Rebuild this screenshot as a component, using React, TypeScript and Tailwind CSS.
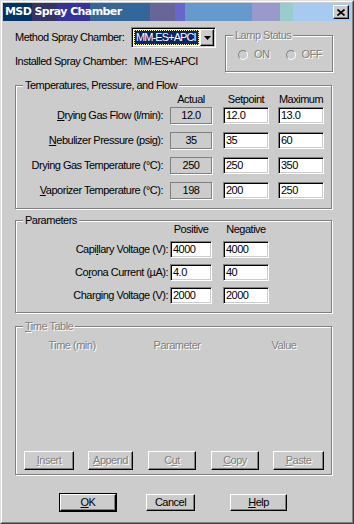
import React from "react";

const EDIT =
  "h-[17px] bg-white border border-t-[#808080] border-l-[#808080] border-b-white border-r-white shadow-[inset_1px_1px_0_#000,inset_-1px_-1px_0_#cccccc] flex items-center pl-[2px] leading-none";
const STATIC =
  "h-[17px] w-[42px] border border-[#808080] shadow-[1px_1px_0_#fff] flex items-center justify-center leading-none";
const GROUP =
  "relative border border-[#808080] shadow-[inset_1px_1px_0_#fff,1px_1px_0_#fff]";
const GLABEL = "absolute left-[7px] top-[-7px] bg-[#cccccc] px-[2px] leading-[13px]";
const DIS = "text-[#808080] [text-shadow:1px_1px_0_#fff]";
const BTN =
  "flex items-center justify-center bg-[#cccccc] border border-t-white border-l-white border-b-black border-r-black shadow-[inset_-1px_-1px_0_#808080] leading-none";

function Radio() {
  return (
    <div className="w-[10px] h-[10px] rounded-full border border-t-[#808080] border-l-[#808080] border-b-white border-r-white bg-[#cccccc]" />
  );
}

export default function App() {
  const segs = [
    { w: "w-[29px]", c: "bg-[#003366]" },
    { w: "w-[25px]", c: "bg-[#333366]" },
    { w: "w-[33px]", c: "bg-[#333399]" },
    { w: "w-[60px]", c: "bg-[#336699]" },
    { w: "w-[25px]", c: "bg-[#666699]" },
    { w: "w-[10px]", c: "bg-[#6666cc]" },
    { w: "w-[67px]", c: "bg-[#6699cc]" },
    { w: "w-[28px]", c: "bg-[#9999cc]" },
    { w: "w-[13px]", c: "bg-[#99cccc]" },
    { w: "w-[58px]", c: "bg-[#a6caf0]" },
  ];
  return (
    <div className="w-[354px] h-[524px] bg-[#cccccc] border border-t-[#dfdfdf] border-l-[#dfdfdf] border-b-[#404040] border-r-[#404040] font-['Liberation_Sans',Arial,sans-serif] text-[11px] tracking-[-0.5px] text-black">
      <div className="h-full border border-t-white border-l-white border-b-[#808080] border-r-[#808080] p-[1px] flex flex-col">
        {/* Title bar */}
        <div className="relative h-[18px] flex shrink-0">
          {segs.map((s, i) => (
            <div key={i} className={`${s.w} ${s.c} h-full`} />
          ))}
          <div className="absolute left-[2px] top-0 h-full flex items-center text-white font-bold text-[11px] tracking-[-0.6px] font-['DejaVu_Sans',sans-serif]">
            MSD Spray Chamber
          </div>
          <div className={`absolute right-[2px] top-[2px] w-[16px] h-[14px] ${BTN}`}>
            <svg width="8" height="7" viewBox="0 0 8 7">
              <path d="M0.5 0.5 L7.5 6.5 M7.5 0.5 L0.5 6.5" stroke="#000" strokeWidth="1.6" />
            </svg>
          </div>
        </div>

        {/* Body */}
        <div className="pl-[12px] flex flex-col">
          {/* Top section */}
          <div className="h-[64px] flex">
            <div className="w-[202px] flex flex-col">
              <div className="mt-[6px] h-[21px] flex items-center">
                <div className="w-[116px] whitespace-nowrap">Method Spray Chamber:</div>
                <div className="w-[85px] h-[21px] border border-t-[#808080] border-l-[#808080] border-b-white border-r-white shadow-[inset_1px_1px_0_#000,inset_-1px_-1px_0_#cccccc] bg-white flex p-[1px]">
                  <div className="flex-1 m-[1px] bg-[#0a246a] border border-dotted border-[#f3f0b0] flex items-center pl-[1px] text-white leading-none whitespace-nowrap overflow-hidden tracking-[-0.9px]">
                    MM-ES+APCI
                  </div>
                  <div className={`w-[14px] h-full ${BTN}`}>
                    <svg width="7" height="4" viewBox="0 0 7 4">
                      <path d="M0 0 H7 L3.5 4 Z" fill="#000" />
                    </svg>
                  </div>
                </div>
              </div>
              <div className="mt-[6px] h-[14px] flex items-center whitespace-nowrap">
                <div className="w-[119px]">Installed Spray Chamber:</div>
                <div>MM-ES+APCI</div>
              </div>
            </div>
            <div className={`ml-[8px] mt-[14px] w-[108px] h-[37px] ${GROUP}`}>
              <div className={`${GLABEL} ${DIS}`}>Lamp Status</div>
              <div className="pl-[12px] pt-[12px] flex items-center h-[25px]">
                <Radio />
                <span className={`ml-[6px] ${DIS}`}>ON</span>
                <div className="ml-[16px]">
                  <Radio />
                </div>
                <span className={`ml-[6px] ${DIS}`}>OFF</span>
              </div>
            </div>
          </div>

          {/* Temperatures group */}
          <div className={`w-[317px] h-[124px] ${GROUP}`}>
            <div className={GLABEL}>Temperatures, Pressure, and Flow</div>
            <div className="pt-[7px] flex flex-col">
              <div className="h-[13px] flex items-center">
                <div className="w-[147px]" />
                <div className="ml-[7px] w-[42px] text-center">Actual</div>
                <div className="ml-[11px] w-[46px] text-center">Setpoint</div>
                <div className="ml-[9px] w-[46px] text-center">Maximum</div>
              </div>
              <div className="mt-[1px] flex flex-col gap-[8px]">
                {[
                  { l: <><u>D</u>rying Gas Flow (l/min):</>, a: "12.0", s: "12.0", m: "13.0" },
                  { l: <><u>N</u>ebulizer Pressure (psig):</>, a: "35", s: "35", m: "60" },
                  { l: <>Drying Gas Temperature (°C):</>, a: "250", s: "250", m: "350" },
                  { l: <><u>V</u>aporizer Temperature (°C):</>, a: "198", s: "200", m: "250" },
                ].map((r, i) => (
                  <div key={i} className="h-[17px] flex items-center">
                    <div className="w-[147px] text-right whitespace-nowrap">{r.l}</div>
                    <div className={`ml-[7px] ${STATIC}`}>{r.a}</div>
                    <div className={`ml-[11px] w-[46px] ${EDIT}`}>{r.s}</div>
                    <div className={`ml-[9px] w-[46px] ${EDIT}`}>{r.m}</div>
                  </div>
                ))}
              </div>
            </div>
          </div>

          {/* Parameters group */}
          <div className={`mt-[11px] w-[317px] h-[93px] ${GROUP}`}>
            <div className={GLABEL}>Parameters</div>
            <div className="pt-[2px] flex flex-col">
              <div className="h-[13px] flex items-center">
                <div className="w-[152px]" />
                <div className="ml-[2px] w-[42px] text-center">Positive</div>
                <div className="ml-[11px] w-[46px] text-center">Negative</div>
              </div>
              <div className="mt-[5px] flex flex-col gap-[6px]">
                {[
                  { l: <>Capi<u>l</u>lary Voltage (V):</>, p: "4000", n: "4000" },
                  { l: <>Co<u>r</u>ona Current (µA):</>, p: "4.0", n: "40" },
                  { l: <>Char<u>g</u>ing Voltage (V):</>, p: "2000", n: "2000" },
                ].map((r, i) => (
                  <div key={i} className="h-[17px] flex items-center">
                    <div className="w-[152px] text-right whitespace-nowrap">{r.l}</div>
                    <div className={`ml-[2px] w-[42px] ${EDIT}`}>{r.p}</div>
                    <div className={`ml-[11px] w-[46px] ${EDIT}`}>{r.n}</div>
                  </div>
                ))}
              </div>
            </div>
          </div>

          {/* Time Table group */}
          <div className={`mt-[13px] w-[317px] h-[149px] flex flex-col ${GROUP}`}>
            <div className={`${GLABEL} ${DIS}`}>
              <u>T</u>ime Table
            </div>
            <div className={`pt-[12px] h-[25px] flex items-center ${DIS}`}>
              <div className="w-[112px] text-center">Time (min)</div>
              <div className="w-[98px] text-center">Parameter</div>
              <div className="ml-[28px] w-[60px] text-center">Value</div>
            </div>
            <div className="flex-1" />
            <div className="pb-[4px] pl-[8px] flex items-center">
              <div className={`w-[50px] h-[19px] ${BTN} ${DIS}`}>
                <span><u>I</u>nsert</span>
              </div>
              <div className={`ml-[14px] w-[45px] h-[19px] ${BTN} ${DIS}`}>
                <span><u>A</u>ppend</span>
              </div>
              <div className={`ml-[15px] w-[48px] h-[19px] ${BTN} ${DIS}`}>
                <span>C<u>u</u>t</span>
              </div>
              <div className={`ml-[15px] w-[48px] h-[19px] ${BTN} ${DIS}`}>
                <span><u>C</u>opy</span>
              </div>
              <div className={`ml-[14px] w-[51px] h-[19px] ${BTN} ${DIS}`}>
                <span><u>P</u>aste</span>
              </div>
            </div>
          </div>

          {/* Dialog buttons */}
          <div className="mt-[18px] h-[19px] flex items-center">
            <div className="ml-[44px] w-[58px] h-[19px] border border-black flex">
              <div className={`flex-1 ${BTN}`}>
                <span><u>O</u>K</span>
              </div>
            </div>
            <div className={`ml-[29px] w-[49px] h-[17px] ${BTN}`}>Cancel</div>
            <div className={`ml-[35px] w-[57px] h-[17px] ${BTN}`}>
              <span><u>H</u>elp</span>
            </div>
          </div>
        </div>
      </div>
    </div>
  );
}
